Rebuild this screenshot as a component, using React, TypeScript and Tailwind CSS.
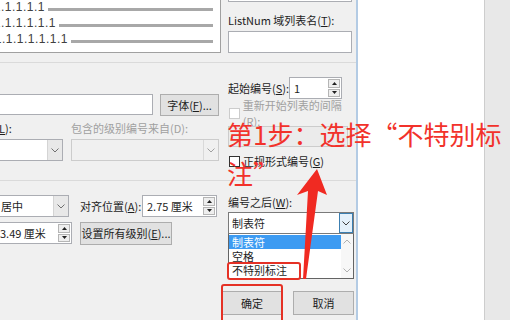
import clsx from "clsx";

const Chevron = ({ up = false, color = "#707070" }: { up?: boolean; color?: string }) => (
  <svg width="8" height="5" viewBox="0 0 8 5">
    <path d={up ? "M0.5 4.5 L4 1 L7.5 4.5" : "M0.5 0.5 L4 4 L7.5 0.5"} fill="none" stroke={color} strokeWidth="1" />
  </svg>
);

const Tri = ({ up = false }: { up?: boolean }) => (
  <svg width="5" height="3" viewBox="0 0 5 3">
    <path d={up ? "M0 3 L2.5 0 L5 3 Z" : "M0 0 L2.5 3 L5 0 Z"} fill="#202020" />
  </svg>
);

function Combo({ text, className, disabled = false }: { text?: string; className: string; disabled?: boolean }) {
  return (
    <div
      className={clsx(
        "flex h-[22px] border",
        disabled ? "border-[#cccccc] bg-[#f0f0f0]" : "border-[#abadb3] bg-white",
        className
      )}
    >
      <div className="flex-1 flex items-center pl-[10px] text-[11px] whitespace-nowrap">{text}</div>
      <div
        className={clsx(
          "w-[15px] flex items-center justify-center border-l",
          disabled ? "border-[#d9d9d9] bg-[#f0f0f0]" : "border-[#d4d4d4] bg-[#e8e8e8]"
        )}
      >
        <Chevron color={disabled ? "#a0a0a0" : "#707070"} />
      </div>
    </div>
  );
}

function Spin({ value, className, pad = "pl-[4px]" }: { value: string; className: string; pad?: string }) {
  return (
    <div className={clsx("flex h-[22px] border border-[#abadb3] bg-white", className)}>
      <div className={clsx("flex-1 flex items-center text-[11px] whitespace-nowrap", pad)}>{value}</div>
      <div className="w-[14px] flex flex-col p-[1px] gap-[1px]">
        <div className="flex-1 flex items-center justify-center border border-[#b5b5b5] bg-[#eeeeee]">
          <Tri up />
        </div>
        <div className="flex-1 flex items-center justify-center border border-[#b5b5b5] bg-[#eeeeee]">
          <Tri />
        </div>
      </div>
    </div>
  );
}

function Btn({ children, className }: { children: React.ReactNode; className: string }) {
  return (
    <div
      className={clsx(
        "flex items-center justify-center border border-[#adadad] bg-[#e1e1e1] text-[11px] whitespace-nowrap",
        className
      )}
    >
      {children}
    </div>
  );
}

function Check({ label, disabled = false }: { label: React.ReactNode; disabled?: boolean }) {
  return (
    <div className={clsx("flex items-center h-[14px] text-[11px]", disabled ? "text-[#a0a0a0]" : "text-[#1e1e1e]")}>
      <div
        className={clsx(
          "w-[11px] h-[11px] ml-[1px] border bg-white",
          disabled ? "border-[#cccccc]" : "border-[#333333]"
        )}
      />
      <span className="ml-[3px]">{label}</span>
    </div>
  );
}

// preview lines, each level one "1." longer
const previewRows = [
  { text: "1.1.1.1.1.1.1.1", width: "w-[45px]" },
  { text: "1.1.1.1.1.1.1.1.1", width: "w-[56px]" },
  { text: "1.1.1.1.1.1.1.1.1.1", width: "w-[68px]" },
];

export default function App() {
  return (
    <div className="relative w-[510px] h-[320px] flex overflow-hidden bg-[#f0f0f0] text-[#1e1e1e] font-['Noto_Sans_CJK_SC','Liberation_Sans',sans-serif]">
      {/* dialog */}
      <div className="w-[356px] shrink-0 flex flex-col">
        {/* preview + ListNum */}
        <div className="h-[62px] flex">
          <div className="w-[222px] shrink-0">
            <div className="w-[221px] h-[53px] border-r border-b border-[#a0a0a0] bg-white flex flex-col overflow-hidden">
              {previewRows.map((row, i) => (
                <div key={i} className={clsx("flex items-end h-[16px] shrink-0", i === 0 && "-mt-[3px]")}>
                  <div className={clsx("flex justify-end overflow-hidden whitespace-nowrap text-[12px] leading-[12px] text-[#404040] font-['Liberation_Sans',sans-serif] tracking-[0.5px]", row.width)}>
                    {row.text}
                  </div>
                  <div className="flex-1 ml-[3px] mr-[7px] h-[3px] mb-[2px] bg-[#a8a8a8]" />
                </div>
              ))}
            </div>
          </div>
          <div className="flex-1 pl-[6px] pr-[4px] flex flex-col">
            <div className="h-[2px] border-x border-b border-[#abadb3] bg-white" />
            <div className="mt-[11px] text-[11px] leading-[14px] whitespace-nowrap">
              ListNum 域列表名(<u>T</u>):
            </div>
            <div className="mt-[4px] h-[22px] border border-[#abadb3] bg-white" />
          </div>
        </div>

        {/* number format */}
        <div className="h-[118px] flex border-t border-[#dadada]">
          <div className="w-[232px] shrink-0 -ml-[10px] pt-[31px] flex flex-col">
            <div className="flex">
              <div className="w-[163px] h-[21px] border border-[#abadb3] bg-white" />
              <Btn className="ml-[7px] w-[59px] h-[22px]">
                字体(<u>F</u>)...
              </Btn>
            </div>
            <div className="mt-[5px] h-[14px] flex items-center text-[11px] whitespace-nowrap">
              <span className="ml-[9px] w-[72px]">
                <u>L</u>):
              </span>
              <span className="text-[#a0a0a0]">包含的级别编号来自(D):</span>
            </div>
            <div className="mt-[4px] flex">
              <Combo className="w-[73px]" />
              <Combo className="ml-[8px] w-[148px]" disabled />
            </div>
          </div>
          <div className="flex-1 pl-[6px] pt-[14px] flex flex-col">
            <div className="flex items-center">
              <span className="w-[61px] text-[11px] whitespace-nowrap">
                起始编号(<u>S</u>):
              </span>
              <Spin value="1" className="w-[53px] h-[21px]" />
            </div>
            <div className="mt-[7px]">
              <Check label="重新开始列表的间隔(R):" disabled />
            </div>
            <div className="mt-[6px] w-[120px] h-[21px] border border-[#cccccc] bg-[#ebebeb]" />
            <div className="mt-[7px]">
              <Check label={<>正规形式编号(<u>G</u>)</>} />
            </div>
          </div>
        </div>

        {/* position */}
        <div className="flex-1 flex border-t border-[#dadada]">
          <div className="w-[232px] shrink-0 -ml-[10px] pt-[14px] flex flex-col">
            <div className="flex items-center">
              <Combo text="居中" className="w-[79px]" />
              <span className="ml-[11px] w-[62px] text-[11px] whitespace-nowrap">
                对齐位置(<u>A</u>):
              </span>
              <Spin value="2.75 厘米" className="w-[75px]" />
            </div>
            <div className="mt-[5px] flex">
              <Spin value="3.49 厘米" className="w-[82px]" pad="pl-[9px]" />
              <Btn className="ml-[8px] w-[92px] h-[23px]">
                设置所有级别(<u>E</u>)...
              </Btn>
            </div>
          </div>
          <div className="flex-1 pl-[6px] pr-[4px] pt-[14px] flex flex-col">
            <div className="text-[11px] leading-[14px] whitespace-nowrap">
              编号之后(<u>W</u>):
            </div>
            <div className="mt-[3px] flex h-[22px] border border-[#7a7a7a] bg-white">
              <div className="flex-1 flex items-center pl-[3px] text-[11px]">制表符</div>
              <div className="w-[14px] flex items-center justify-center border border-[#3c7fb1] bg-[#e5f1fb]">
                <Chevron color="#404040" />
              </div>
            </div>
            <div className="flex h-[45px] border border-t-0 border-[#646464] bg-white text-[11px] leading-[14px]">
              <div className="flex-1 flex flex-col pt-[1px]">
                <div className="h-[14px] pl-[3px] bg-[#3d9bf2] text-white">制表符</div>
                <div className="h-[14px] pl-[3px]">空格</div>
                <div className="h-[14px] pl-[3px]">不特别标注</div>
              </div>
              <div className="w-[12px] flex flex-col justify-between items-center py-[5px] bg-[#f7f7f7]">
                <Chevron up color="#b0b0b0" />
                <Chevron color="#b0b0b0" />
              </div>
            </div>
            <div className="mt-[12px] flex -ml-[6px] gap-[11px]">
              <Btn className="w-[60px] h-[24px]">确定</Btn>
              <Btn className="w-[61px] h-[24px]">取消</Btn>
            </div>
          </div>
        </div>
      </div>

      <div className="w-[2px] shrink-0 bg-[#b3cbe4]" />
      <div className="w-[126px] shrink-0 bg-white" />
      <div className="w-px shrink-0 bg-[#cdcdcd]" />
      <div className="flex-1 bg-[#e8e8e8]" />

      {/* annotations */}
      <div className="absolute left-[227px] top-[114px] w-[283px] text-[26px] leading-[39px] text-[#f2322b]">
        第1步：选择“不特别标注”
      </div>
      <svg className="absolute left-0 top-0" width="510" height="320" viewBox="0 0 510 320">
        <polygon points="317,169 327,195 318,191 306,279 303,279 308,191 297,195" fill="#f02a22" />
      </svg>
      <div className="absolute left-[227px] top-[262px] w-[74px] h-[18px] border-2 border-[#e53125] rounded-[3px]" />
      <div className="absolute left-[221px] top-[284px] w-[62px] h-[42px] border-2 border-[#e53125] rounded-[3px]" />
    </div>
  );
}
